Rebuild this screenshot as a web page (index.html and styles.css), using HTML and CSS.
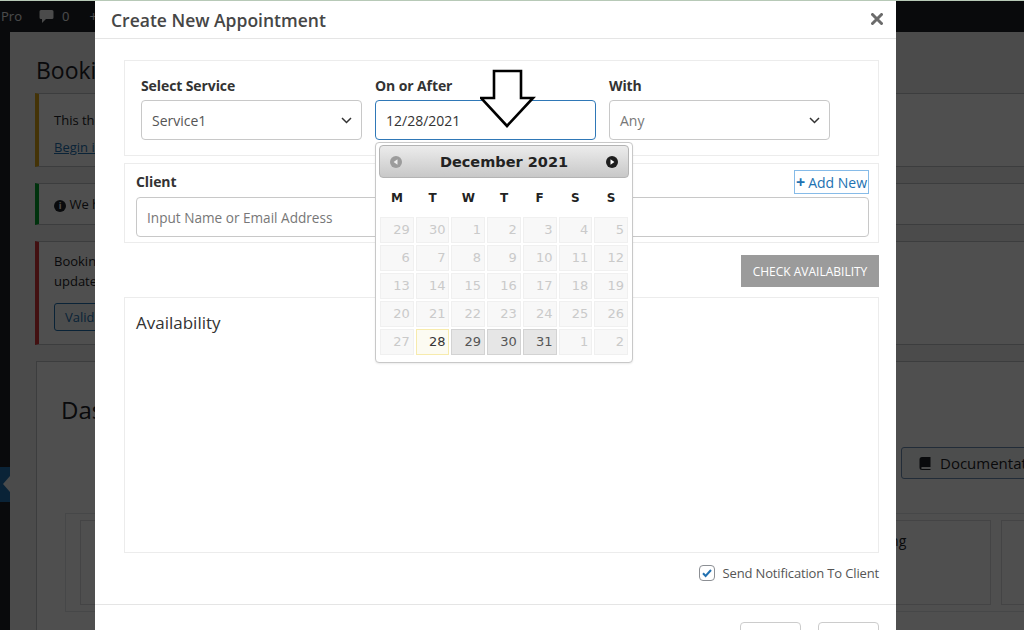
FILE: index.html
```html
<!DOCTYPE html>
<html lang="en">
<head>
<meta charset="utf-8">
<title>Create New Appointment</title>
<link rel="stylesheet" href="styles.css">
</head>
<body>
<div class="topline"></div>
<div class="adminbar">
  <span class="ab-site">Pro</span>
  <span class="ab-comments">
    <svg class="ab-bubble" width="15" height="15" viewBox="0 0 15 15"><path d="M2 1h11a1.5 1.5 0 0 1 1.5 1.5v6A1.5 1.5 0 0 1 13 10H7l-4 4v-4H2A1.5 1.5 0 0 1 .5 8.5v-6A1.5 1.5 0 0 1 2 1z" fill="#f0f0f1"/></svg>
    <span>0</span>
  </span>
  <span class="ab-new">+ New</span>
</div>
<div class="wp">
  <nav class="menu"><div class="menu-current"></div></nav>
  <main class="content">
    <h1 class="page-title">Bookings</h1>
    <div class="notice notice-warning">
      <p>This theme requires the following plugin.</p>
      <p><a href="#">Begin installing plugin</a></p>
    </div>
    <div class="notice notice-success">
      <p><span class="info-ico">i</span> We have updated the plugin.</p>
    </div>
    <div class="notice notice-error">
      <p>Booking license is not active. Please<br>update your license key.</p>
      <button class="wp-btn">Validate License</button>
    </div>
    <section class="dash">
      <h2 class="dash-title">Dashboard</h2>
      <div class="dash-actions">
        <span class="doc-btn">
          <svg width="12" height="13" viewBox="0 0 12 13"><path d="M3 0h8.5v10H3.2a1 1 0 0 0 0 2h8.3v1H3a2.5 2.5 0 0 1-2.5-2.5V2.5A2.5 2.5 0 0 1 3 0z" fill="#1d2327"/></svg>
          Documentation
        </span>
      </div>
      <div class="dash-wrap">
        <div class="dash-cards">
          <div class="card"><div class="card-title">Today Booking</div></div>
          <div class="card"><div class="card-title">Pending Booking</div></div>
          <div class="card"><div class="card-title">Total Upcoming Booking</div></div>
          <div class="card"><div class="card-title">Clients</div></div>
        </div>
      </div>
    </section>
  </main>
</div>
<div class="backdrop"></div>

<div class="modal">
  <div class="modal-header">
    <h4 class="modal-title">Create New Appointment</h4>
    <svg class="close" width="12" height="12" viewBox="0 0 12 12"><path d="M1.5 1.5l9 9M10.5 1.5l-9 9" stroke="#6b6b6b" stroke-width="3" stroke-linecap="round"/></svg>
  </div>
  <div class="modal-body">
    <div class="panel panel-top">
      <div class="field">
        <label class="lbl">Select Service</label>
        <div class="control">
          <span>Service1</span>
          <svg width="11" height="7" viewBox="0 0 11 7"><path d="M1 1l4.5 4.5L10 1" stroke="#333" stroke-width="1.5" fill="none"/></svg>
        </div>
      </div>
      <div class="field field-date">
        <label class="lbl">On or After</label>
        <div class="control control-focus"><span class="val-dark">12/28/2021</span></div>
        <div class="dp">
          <div class="dp-head">
            <svg width="12" height="12" viewBox="0 0 12 12"><circle cx="6" cy="6" r="6" fill="#9c9c9c"/><path d="M7.5 3.2v5.6L3.6 6z" fill="#eee"/></svg>
            <span>December 2021</span>
            <svg width="12" height="12" viewBox="0 0 12 12"><circle cx="6" cy="6" r="6" fill="#1e1e1e"/><path d="M4.5 3.2v5.6L8.4 6z" fill="#fff"/></svg>
          </div>
          <div class="dp-dow"><span>M</span><span>T</span><span>W</span><span>T</span><span>F</span><span>S</span><span>S</span></div>
          <div class="dp-days">
            <span class="off">29</span><span class="off">30</span><span class="off">1</span><span class="off">2</span><span class="off">3</span><span class="off">4</span><span class="off">5</span>
            <span class="off">6</span><span class="off">7</span><span class="off">8</span><span class="off">9</span><span class="off">10</span><span class="off">11</span><span class="off">12</span>
            <span class="off">13</span><span class="off">14</span><span class="off">15</span><span class="off">16</span><span class="off">17</span><span class="off">18</span><span class="off">19</span>
            <span class="off">20</span><span class="off">21</span><span class="off">22</span><span class="off">23</span><span class="off">24</span><span class="off">25</span><span class="off">26</span>
            <span class="off">27</span><span class="today">28</span><span class="on">29</span><span class="on">30</span><span class="on">31</span><span class="off">1</span><span class="off">2</span>
          </div>
        </div>
      </div>
      <div class="field">
        <label class="lbl">With</label>
        <div class="control">
          <span class="val-light">Any</span>
          <svg width="11" height="7" viewBox="0 0 11 7"><path d="M1 1l4.5 4.5L10 1" stroke="#333" stroke-width="1.5" fill="none"/></svg>
        </div>
      </div>
    </div>

    <div class="panel panel-client">
      <div class="client-head">
        <label class="lbl">Client</label>
        <span class="add-btn"><b>+</b> Add New</span>
      </div>
      <div class="control control-wide"><span class="placeholder">Input Name or Email Address</span></div>
    </div>

    <div class="check-row"><span class="check-btn">CHECK AVAILABILITY</span></div>

    <div class="panel panel-avail">
      <h3 class="avail-title">Availability</h3>
    </div>

    <div class="notify-row">
      <span class="cbox"><svg width="14" height="14" viewBox="0 0 14 14"><path d="M3 7.3l2.6 2.7L11 4" stroke="#2271b1" stroke-width="2" fill="none"/></svg></span>
      <span class="notify-text">Send Notification To Client</span>
    </div>
  </div>
  <div class="modal-footer">
    <span class="foot-btn">Close</span>
    <span class="foot-btn">Save</span>
  </div>
  <svg class="arrow" width="58" height="60" viewBox="0 0 58 60"><path d="M14 2h27v27h12L27 57 1 29h13z" fill="#fff" stroke="#000" stroke-width="2.6" stroke-linejoin="miter"/></svg>
</div>
</body>
</html>
```

FILE: styles.css
```css
* { box-sizing: border-box; }
html, body { margin: 0; padding: 0; }
body {
  width: 1024px;
  height: 630px;
  overflow: hidden;
  position: relative;
  background: #f0f0f1;
  color: #1d2327;
  font-family: "Open Sans", "Noto Sans", sans-serif;
  font-size: 13px;
}

.topline {
  position: fixed;
  top: 0; left: 0; right: 0;
  height: 1px;
  background: #b7c9b7;
  z-index: 50;
}

/* WordPress admin bar */
.adminbar {
  height: 32px;
  background: #1d2327;
  color: #f0f0f1;
  display: flex;
  align-items: center;
  font-size: 13px;
  padding-left: 1px;
}
.ab-site { margin-right: 17px; }
.ab-comments { display: flex; align-items: center; gap: 8px; margin-right: 20px; }
.ab-bubble { margin-top: 1px; }
.ab-new { font-size: 14px; }

.wp { display: flex; height: 598px; }
.menu { width: 10px; background: #1d2327; flex: none; }
.menu-current {
  margin-top: 435px;
  height: 35px;
  background: #2271b1;
  position: relative;
}
.menu-current::after {
  content: "";
  position: absolute;
  right: 0; top: 9px;
  border-right: 7px solid #f0f0f1;
  border-top: 8px solid transparent;
  border-bottom: 8px solid transparent;
}
.content { flex: 1; padding: 0 20px 0 25px; }
.page-title {
  font-size: 23px;
  font-weight: 400;
  line-height: 30px;
  margin: 23px 0 8px 1px;
  color: #1d2327;
}
.notice {
  background: #fff;
  border: 1px solid #c3c4c7;
  border-left-width: 4px;
  margin-bottom: 16px;
  padding: 10px 15px;
}
.notice p { margin: 0; line-height: 20px; }
.notice-warning { border-left-color: #dba617; padding: 16px 15px 9px; }
.notice-warning p + p { margin-top: 7px; }
.notice-warning a { color: #2271b1; }
.notice-success { border-left-color: #00a32a; }
.notice-error { border-left-color: #d63638; padding-bottom: 13px; }
.notice-error p { line-height: 19.5px; }
.info-ico {
  display: inline-block;
  width: 12px; height: 12px;
  border-radius: 50%;
  background: #1d2327;
  color: #fff;
  font-size: 9px;
  font-weight: 700;
  line-height: 12px;
  text-align: center;
}
.wp-btn {
  margin-top: 12px;
  height: 28px;
  padding: 0 10px;
  font: 13px "Open Sans", sans-serif;
  color: #2271b1;
  background: #f6f7f7;
  border: 1px solid #2271b1;
  border-radius: 3px;
}
.dash {
  background: #fff;
  border: 1px solid #c3c4c7;
  margin-left: 1px;
  height: 400px;
  padding: 32px 0 0 24px;
}
.dash-title { font-size: 24px; font-weight: 400; line-height: 32px; margin: 0; }
.dash-actions { margin-top: 21px; display: grid; grid-template-columns: 840px auto; }
.doc-btn {
  grid-column: 2;
  height: 32px;
  border: 1px solid #6f8fb5;
  border-radius: 3px;
  background: #f6f7f7;
  display: flex;
  align-items: center;
  gap: 9px;
  padding: 0 14px 0 17px;
  font-size: 15px;
  white-space: nowrap;
}
.dash-wrap {
  margin: 34px 0 0 4px;
  border: 1px solid #e2e4e7;
  padding: 6px 14px;
}
.dash-cards { display: flex; gap: 10px; }
.card {
  flex: none;
  width: 297px;
  height: 85px;
  border: 1px solid #dcdcde;
  background: #fff;
  padding: 10px 16px;
}
.card-title { font-size: 14px; white-space: nowrap; margin-left: 36px; }

.backdrop {
  position: fixed;
  inset: 0;
  background: rgba(0, 0, 0, 0.69);
  z-index: 10;
}

/* Modal */
.modal {
  position: fixed;
  left: 95px;
  top: 0;
  width: 801px;
  height: 680px;
  background: #fff;
  z-index: 20;
  color: #333;
  font-family: "Open Sans", "Noto Sans", sans-serif;
  font-size: 14px;
}
.modal-header {
  height: 39px;
  border-bottom: 1px solid #e5e5e5;
  display: flex;
  align-items: center;
  justify-content: space-between;
  padding: 2px 13px 0 16px;
}
.modal-title {
  margin: 0;
  font-size: 17.5px;
  font-weight: 600;
  color: #464646;
}
.close { margin-top: -3px; }
.modal-body { padding: 21px 17px 23px 29px; }
.panel { border: 1px solid #ececec; }
.panel-top {
  display: grid;
  grid-template-columns: repeat(3, 221px);
  column-gap: 13px;
  padding: 15px 0 15px 16px;
}
.field { position: relative; }
.lbl {
  display: block;
  font-size: 14px;
  font-weight: 700;
  line-height: 20px;
  color: #333;
  margin-bottom: 4px;
  letter-spacing: -0.1px;
}
.control {
  height: 40px;
  border: 1px solid #c8c8c8;
  border-radius: 4px;
  padding: 0 9px 0 10px;
  display: flex;
  align-items: center;
  justify-content: space-between;
  color: #555;
  font-size: 14px;
}
.control-focus { border-color: #2f78b7; }
.val-dark { color: #333; }
.val-light { color: #777; }
.placeholder { color: #777; font-size: 13.6px; }

/* datepicker */
.dp {
  position: absolute;
  top: 66px;
  left: 0;
  width: 258px;
  background: #fff;
  border: 1px solid #c8c8c8;
  border-radius: 4px;
  padding: 2px 3px 7px;
  font-family: "DejaVu Sans", Verdana, sans-serif;
  z-index: 5;
  box-shadow: 0 1px 2px rgba(0,0,0,.08);
}
.dp-head {
  height: 33px;
  border: 1px solid #b4b4b4;
  border-radius: 4px;
  background: linear-gradient(#ececec, #c8c8c8);
  display: flex;
  align-items: center;
  justify-content: space-between;
  padding: 0 10px;
  font-size: 14.5px;
  font-weight: 700;
  color: #222;
}
.dp-dow, .dp-days {
  display: grid;
  grid-template-columns: repeat(7, 1fr);
  column-gap: 2px;
  padding: 0 1px;
  margin-top: 3px;
}
.dp-dow {
  height: 33px;
  align-items: center;
  text-align: center;
  font-size: 12px;
  font-weight: 700;
  color: #222;
}
.dp-days { grid-auto-rows: 26px; row-gap: 2px; }
.dp-days span {
  border: 1px solid #d3d3d3;
  background: #e6e6e6;
  color: #555;
  text-align: right;
  padding-right: 3px;
  font-size: 13px;
  line-height: 24px;
}
.dp-days .off { border-color: #f0f0f0; background: #f8f8f8; color: #cacaca; }
.dp-days .today { border-color: #f7ebad; background: #fcfbf2; color: #363636; }

.panel-client { margin-top: 7px; padding: 6px 9px 5px 11px; }
.client-head {
  display: flex;
  justify-content: space-between;
  align-items: center;
  height: 24px;
}
.client-head .lbl { margin: 0; }
.add-btn {
  height: 24px;
  width: 75px;
  border: 1px solid #86bbe8;
  color: #2271b1;
  display: flex;
  align-items: center;
  justify-content: center;
  gap: 3px;
  font-size: 14px;
}
.add-btn b { font-size: 16px; }
.control-wide { margin-top: 3px; }

.check-row { display: flex; justify-content: flex-end; margin-top: 12px; }
.check-btn {
  height: 32px;
  width: 138px;
  background: #9b9b9b;
  color: #fff;
  font-size: 12px;
  display: flex;
  align-items: center;
  justify-content: center;
}
.panel-avail { margin-top: 10px; height: 256px; padding: 13px 11px; }
.avail-title { margin: 0; font-size: 17px; font-weight: 500; line-height: 24px; color: #333; }

.notify-row {
  margin-top: 12px;
  display: flex;
  justify-content: flex-end;
  align-items: center;
  gap: 8px;
  height: 16px;
}
.cbox {
  width: 16px; height: 16px;
  border: 1px solid #8c8f94;
  border-radius: 4px;
  display: flex;
  align-items: center;
  justify-content: center;
}
.notify-text { color: #555; font-size: 13px; letter-spacing: -0.15px; }

.modal-footer {
  border-top: 1px solid #e5e5e5;
  padding: 17px 17px 0;
  display: flex;
  justify-content: flex-end;
  gap: 17px;
}
.foot-btn {
  width: 61px;
  height: 34px;
  border: 1px solid #ccc;
  border-radius: 4px;
  display: flex;
  align-items: center;
  justify-content: center;
  color: #333;
}

.arrow {
  position: absolute;
  left: 385px;
  top: 69px;
  z-index: 8;
}
```
